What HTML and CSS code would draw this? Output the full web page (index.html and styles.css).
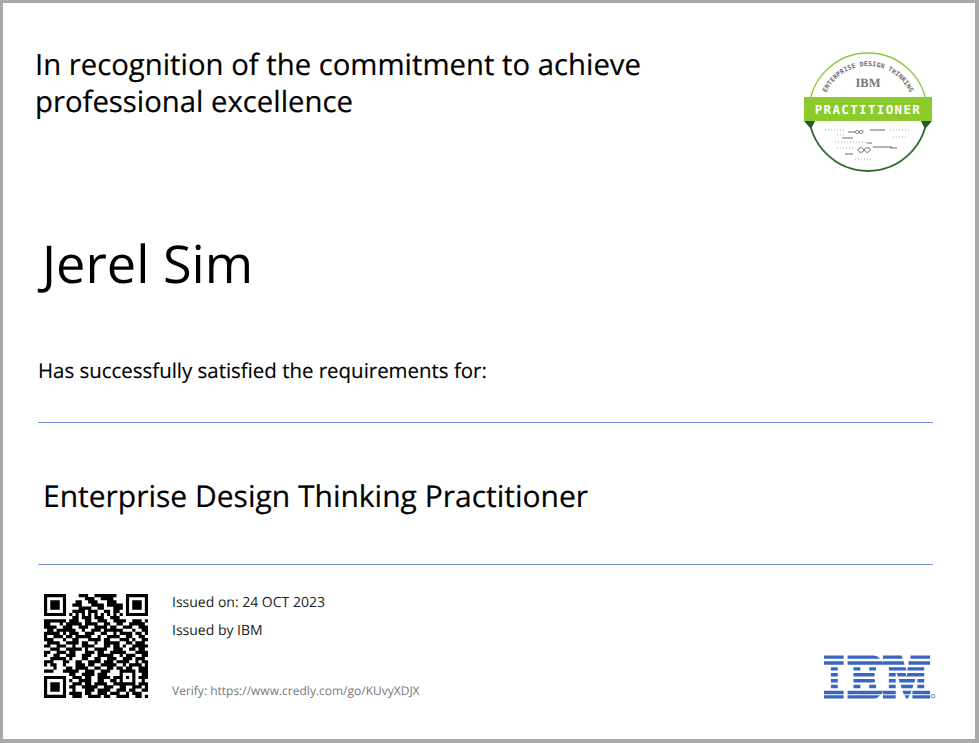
FILE: index.html
```html
<!DOCTYPE html>
<html lang="en">
<head>
<meta charset="utf-8">
<title>Enterprise Design Thinking Practitioner</title>
<link rel="stylesheet" href="styles.css">
</head>
<body>
<main class="certificate">
  <header class="top">
    <h1 class="recognition">In recognition of the commitment to achieve<br>professional excellence</h1>
    <svg class="badge" viewBox="0 0 130 124" width="130" height="124" aria-label="Enterprise Design Thinking Practitioner badge">
      <defs>
        <path id="arc" d="M19 62a46 46 0 0 1 92 0"/>
      </defs>
      <circle cx="65" cy="62" r="59" fill="#fff"/>
      <path d="M6 62a59 59 0 0 1 118 0" fill="none" stroke="#92c83e" stroke-width="1.400"/>
      <path d="M6 62a59 59 0 0 0 118 0" fill="none" stroke="#2f6b2f" stroke-width="1.800"/>
      <text class="badge-arc"><textPath href="#arc" startOffset="50%" text-anchor="middle">ENTERPRISE DESIGN THINKING</textPath></text>
      <text class="badge-ibm" x="65" y="37" text-anchor="middle">IBM</text>
      <path d="M1 71h11l-4 8zM129 71h-11l4 8z" fill="#24592a"/>
      <rect x="1" y="47" width="128" height="24" fill="#8bcb2c"/>
      <text class="badge-title" x="65" y="63.500" text-anchor="middle">PRACTITIONER</text>
      <g class="badge-marks">
        <path class="badge-dots" d="M22 80h21M87 80h20M34 85h8M90 87h14M32 92h32M34 98h16M52 109h17"/>
        <path class="badge-solid" d="M39 88h11M45 82h7M67 80h15M64 93h5M70 97h19M87 98h7M42 104h8"/>
        <path class="badge-solid" d="M52 82c1-2 3-2 4 0s3 2 4 0-3-2-4 0-3 2-4 0zM55 100c1-3 4-3 6 0s5 3 6 0-5-3-6 0-5 3-6 0z"/>
      </g>
    </svg>
  </header>

  <p class="name">Jerel Sim</p>
  <p class="statement">Has successfully satisfied the requirements for:</p>

  <section class="course">
    <h2 class="course-title">Enterprise Design Thinking Practitioner</h2>
  </section>

  <footer class="bottom">
    <svg class="qr" viewBox="0 0 33 33" width="104" height="104" aria-label="QR code">
      <path d="M0 .5h7m4 0h3m2 0h7m3 0h7M0 1.500h1m5 0h1m6 0h3m2 0h4m4 0h1m5 0h1M0 2.500h1m1 0h3m1 0h1m3 0h2m2 0h3m3 0h3m3 0h1m1 0h3m1 0h1M0 3.500h1m1 0h3m1 0h1m2 0h3m3 0h4m1 0h5m1 0h1m1 0h3m1 0h1M0 4.500h1m1 0h3m1 0h1m4 0h4m2 0h2m3 0h3m1 0h1m1 0h3m1 0h1M0 5.500h1m5 0h1m2 0h4m1 0h3m2 0h2m1 0h2m2 0h1m5 0h1M0 6.500h7m1 0h1m1 0h1m1 0h1m1 0h1m1 0h1m1 0h1m1 0h1m1 0h1m1 0h1m1 0h7M9 7.500h2m1 0h3m1 0h3m2 0h3M0 8.500h7m1 0h3m2 0h2m2 0h3m2 0h4m2 0h3m1 0h1M0 9.500h2m3 0h1m1 0h5m1 0h4m2 0h2m2 0h2m2 0h5M0 10.500h4m2 0h3m2 0h3m2 0h4m1 0h2m2 0h3m2 0h3M1 11.500h2m1 0h6m2 0h1m2 0h3m1 0h6m3 0h1m2 0h2M0 12.500h5m1 0h1m1 0h3m2 0h3m2 0h2m2 0h1m1 0h4m1 0h2m1 0h1M0 13.500h1m2 0h3m1 0h2m1 0h5m2 0h1m2 0h4m2 0h2m2 0h2M0 14.500h3m3 0h1m2 0h2m3 0h4m1 0h2m3 0h3m1 0h1m2 0h2M1 15.500h4m2 0h4m1 0h2m2 0h1m2 0h5m2 0h2m1 0h3M0 16.500h2m2 0h3m2 0h1m2 0h4m3 0h2m1 0h2m1 0h1m2 0h5M2 17.500h3m2 0h5m1 0h1m2 0h4m2 0h3m2 0h2m1 0h2M0 18.500h2m2 0h3m1 0h2m3 0h3m1 0h2m2 0h5m3 0h4M0 19.500h1m2 0h2m2 0h3m2 0h3m2 0h5m2 0h1m1 0h3m2 0h2M2 20.500h5m1 0h1m3 0h2m2 0h2m2 0h3m2 0h3m1 0h3M0 21.500h3m3 0h2m2 0h2m2 0h4m1 0h3m1 0h4m2 0h1m1 0h2M0 22.500h1m1 0h2m2 0h1m3 0h3m1 0h2m2 0h5m2 0h1m1 0h4m1 0h1M3 23.500h1m3 0h2m1 0h4m2 0h2m2 0h2m1 0h2m1 0h2m2 0h3M0 24.500h3m3 0h5m2 0h3m2 0h3m3 0h5m1 0h3M8 25.500h2m2 0h4m1 0h3m4 0h1m3 0h1m2 0h2M0 26.500h7m2 0h3m1 0h2m2 0h4m1 0h3m1 0h1m1 0h1m1 0h3M0 27.500h1m5 0h1m1 0h1m2 0h4m2 0h2m2 0h2m1 0h1m3 0h1m2 0h1M0 28.500h1m1 0h3m1 0h1m2 0h3m1 0h2m1 0h4m2 0h7m1 0h3M0 29.500h1m1 0h3m1 0h1m1 0h2m2 0h5m2 0h3m2 0h2m2 0h3m1 0h1M0 30.500h1m1 0h3m1 0h1m2 0h1m3 0h3m1 0h4m2 0h3m1 0h2m2 0h2M0 31.500h1m5 0h1m1 0h4m1 0h2m2 0h3m1 0h3m2 0h1m1 0h3M0 32.500h7m2 0h3m2 0h4m1 0h2m2 0h4m2 0h2m1 0h1" stroke="#000" stroke-width="1.020" fill="none"/>
    </svg>
    <div class="issue">
      <p class="issue-line">Issued on: 24 OCT 2023</p>
      <p class="issue-line">Issued by IBM</p>
      <p class="verify">Verify: https://www.credly.com/go/KUvyXDJX</p>
    </div>
    <svg class="ibm" viewBox="0 0 114 44" width="112" height="44" aria-label="IBM">
      <g fill="#3866c2">
        <path d="M0 0h20v3.500H0zM24 0h27q4 .5 6 3.500H24zM60 0h19l1 3.500H60zM88 0h20v3.500H88z"/>
        <path d="M0 6h20v3.500H0zM24 6h35q1.500 1.500 1.500 3.500H24zM60 6h21l1 3.500H60zM86 6h22v3.500H86z"/>
        <path d="M7 12h7v3.500H7zM30 12h7v3.500h-7zM46 12h7v3.500h-7zM66 12h17l1 3.500H66zM85 12h17v3.500H85z"/>
        <path d="M7 18h7v3.500H7zM30 18h21l1 1.750-1 1.750H30zM66 18h7v3.500h-7zM74 18h9l1 3.500H75zM85 18h10v3.500H84zM95 18h7v3.500h-7z"/>
        <path d="M7 24h7v3.500H7zM30 24h21q1 1 1 1.750t-1 1.750H30zM66 24h7v3.500h-7zM76 24h17l-1 3.500H77zM95 24h7v3.500h-7z"/>
        <path d="M7 30h7v3.500H7zM30 30h7v3.500h-7zM46 30h7v3.500h-7zM66 30h7v3.500h-7zM78 30h13l-1 3.500H79zM95 30h7v3.500h-7z"/>
        <path d="M0 36h20v3.500H0zM24 36h36q0 1.750-1.500 3.500H24zM60 36h13v3.500H60zM80 36h9l-1 3.500h-7zM90 36h18v3.500H90z"/>
        <path d="M0 40.500h20v3.500H0zM24 40.500h33q-2 3-6 3.500H24zM60 40.500h13v3.500H60zM82 40.500h5l-1.500 3.500h-2zM90 40.500h18v3.500H90z"/>
      </g>
      <circle cx="111" cy="41.500" r="1.800" fill="none" stroke="#3866c2" stroke-width=".8"/>
    </svg>
  </footer>
</main>
</body>
</html>
```

FILE: styles.css
```css
* {
  box-sizing: border-box;
}

html,
body {
  margin: 0;
  height: 100%;
}

body {
  background: #fff;
  font-family: "Open Sans", "Noto Sans", sans-serif;
  color: #000;
  text-rendering: geometricPrecision;
}

.certificate {
  height: 743px;
  border: solid #a9a9ac;
  border-width: 3px 4px 4px 3px;
  padding: 43px 42px 0 35px;
  background: #fff;
  display: flex;
  flex-direction: column;
}

.top {
  display: flex;
  justify-content: space-between;
  align-items: flex-start;
  margin-left: -3px;
}

.recognition {
  margin: 0;
  font-size: 29.300px;
  font-weight: 400;
  line-height: 37px;
  -webkit-text-stroke: .2px #000;
}

.badge {
  flex: none;
  margin-top: 4px;
}

.badge-arc {
  font: 700 6.500px "DejaVu Sans Mono", monospace;
  letter-spacing: .1px;
  fill: #6d6d6d;
}

.badge-ibm {
  font: 700 12.500px "Liberation Serif", serif;
  fill: #777;
}

.badge-title {
  font: 700 12.500px "DejaVu Sans Mono", monospace;
  letter-spacing: 1.350px;
  fill: #fff;
}

.badge-marks {
  fill: none;
}

.badge-dots {
  stroke: #999;
  stroke-width: .8;
  stroke-dasharray: 1 2;
}

.badge-solid {
  stroke: #444;
  stroke-width: .8;
}

.name {
  margin: 54px 0 0 4px;
  font-size: 52.300px;
  line-height: 72px;
}

.statement {
  margin: 57px 0 0;
  font-size: 20.450px;
  line-height: 27px;
  -webkit-text-stroke: .15px #000;
}

.course {
  margin-top: 38px;
  height: 143px;
  border-top: 1px solid #7590d8;
  border-bottom: 1px solid #7590d8;
  display: flex;
  align-items: center;
}

.course-title {
  margin: 4px 0 0 5px;
  font-size: 30px;
  font-weight: 400;
  line-height: 40px;
  -webkit-text-stroke: .2px #000;
}

.bottom {
  display: flex;
  align-items: flex-start;
  margin: 29px -3px 0 6px;
}

.qr {
  flex: none;
}

.issue {
  margin-left: 24px;
  margin-top: -1px;
  flex: 1;
  font-size: 14px;
  color: #222;
}

.issue-line {
  margin: 0 0 9px;
  line-height: 19px;
}

.verify {
  margin: 42px 0 0;
  font-size: 12px;
  line-height: 18px;
  color: #777;
}

.ibm {
  flex: none;
  margin-top: 61px;
}
```
